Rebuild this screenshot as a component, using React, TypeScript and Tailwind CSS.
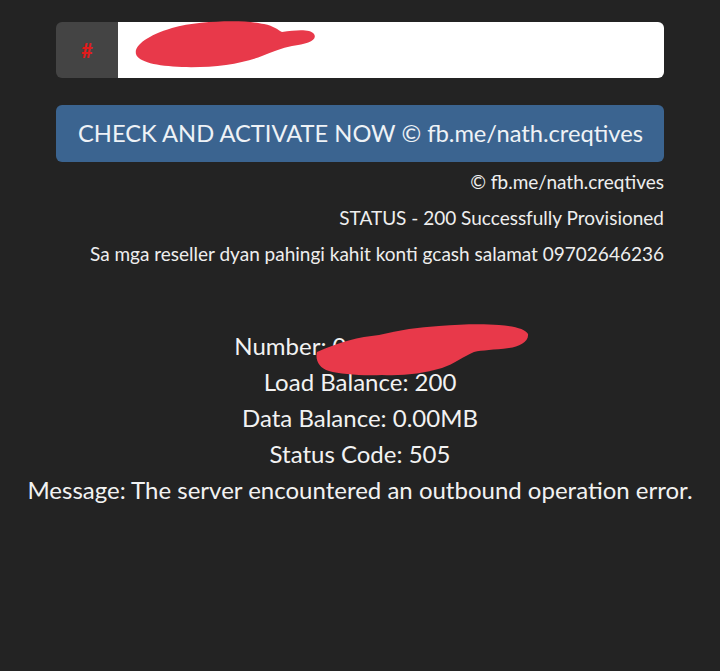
export default function App() {
  const lines = [
    "Load Balance: 200",
    "Data Balance: 0.00MB",
    "Status Code: 505",
    "Message: The server encountered an outbound operation error.",
  ];

  return (
    <div
      className="min-h-[671px] w-[720px] bg-[#232323] text-[#f2f2f2]"
      style={{ fontFamily: "Lato, 'Open Sans', sans-serif" }}
    >
      <div className="px-[56px] pt-[22px]">
        {/* number input */}
        <div className="relative flex h-[56px] rounded-[6px]">
          <div className="flex w-[62px] items-center justify-center rounded-l-[6px] bg-[#444444] text-[20px] font-bold text-[#e01b1b]">
            #
          </div>
          <div className="flex flex-1 items-center rounded-r-[6px] bg-white pl-[20px] text-[22px] text-[#555]">0</div>
          {/* redaction scribble */}
          <svg className="absolute left-[76px] top-[-4px]" width="200" height="60" viewBox="0 0 200 60">
            <path
              d="M40 10 C70 2 115 2 132 6 C142 8 146 12 150 14 C165 12 178 11 182 16 C186 22 175 26 160 28 C150 30 140 34 130 38 C110 46 80 50 50 49 C25 48 6 44 4 36 C2 28 14 18 40 10 Z"
              fill="#e8394a"
            />
          </svg>
        </div>

        <button
          type="button"
          className="mt-[27px] flex h-[57px] w-full items-center rounded-[6px] bg-[#3b6490] pl-[22px] text-[23.7px] text-[#eef2f6]"
        >
          CHECK AND ACTIVATE NOW © fb.me/nath.creqtives
        </button>

        <div className="mt-[8px] flex flex-col items-end gap-[12px] text-[19px] leading-[24px] text-[#eeeeee]">
          <p>© fb.me/nath.creqtives</p>
          <p>STATUS - 200 Successfully Provisioned</p>
          <p>Sa mga reseller dyan pahingi kahit konti gcash salamat 09702646236</p>
        </div>
      </div>

      <div className="mt-[62px] flex flex-col items-center text-[24px] leading-[36px]">
        <div className="relative">
          <p>
            Number: 0<span className="invisible">9123456789</span>
          </p>
          <svg className="absolute left-[80px] top-[-6px]" width="220" height="58" viewBox="0 0 220 58">
            <path
              d="M3 30 C25 20 45 15 65 13 C85 8 105 5 125 4 C150 2 170 2 185 3 C200 4 212 7 214 12 C215 20 205 25 195 26 C180 28 168 28 160 30 C150 34 140 42 128 46 C108 52 88 54 68 53 C48 54 26 52 15 49 C5 46 1 38 3 30 Z"
              fill="#e8394a"
            />
          </svg>
        </div>
        {lines.map((t) => (
          <p key={t}>{t}</p>
        ))}
      </div>
    </div>
  );
}
